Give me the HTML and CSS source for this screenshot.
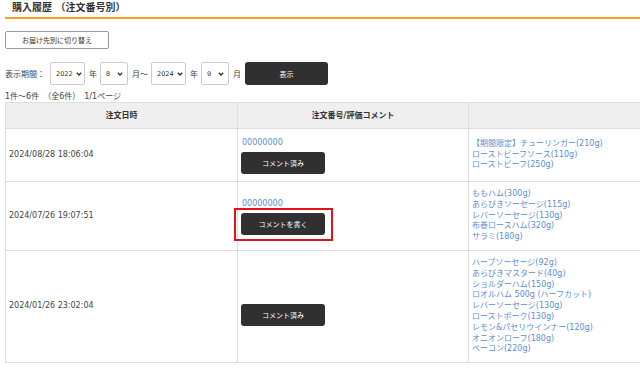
FILE: index.html
```html
<!DOCTYPE html>
<html lang="ja">
<head>
<meta charset="utf-8" />
<title>購入履歴</title>
<link rel="stylesheet" href="styles.css">
</head>
<body>
	<div class="page">
		<h1 class="title">購入履歴 （注文番号別）</h1>
		<button class="switchBtn" type="button">お届け先別に切り替え</button>

		<form class="period" name="period">
			<span class="label">表示期間：</span>
			<span class="select wide"><span>2022</span>
				<svg class="chev" width="6" height="4" viewBox="0 0 6 4"><polyline points="0.8,0.8 3,3 5.2,0.8" /></svg></span>
			<span class="unit">年</span>
			<span class="select"><span>8</span>
				<svg class="chev" width="6" height="4" viewBox="0 0 6 4"><polyline points="0.8,0.8 3,3 5.2,0.8" /></svg></span>
			<span class="unit">月～</span>
			<span class="select wide"><span>2024</span>
				<svg class="chev" width="6" height="4" viewBox="0 0 6 4"><polyline points="0.8,0.8 3,3 5.2,0.8" /></svg></span>
			<span class="unit">年</span>
			<span class="select"><span>9</span>
				<svg class="chev" width="6" height="4" viewBox="0 0 6 4"><polyline points="0.8,0.8 3,3 5.2,0.8" /></svg></span>
			<span class="unit">月</span>
			<button class="darkBtn showBtn" type="button">表示</button>
		</form>

		<p class="count">1件～6件　（全6件）　1/1ページ</p>

		<table class="history">
			<colgroup>
				<col class="colDate" />
				<col class="colOrder" />
				<col class="colItems" />
			</colgroup>
			<thead>
				<tr>
					<th>注文日時</th>
					<th>注文番号/評価コメント</th>
					<th></th>
				</tr>
			</thead>
			<tbody>
				<tr>
					<td class="date">2024/08/28 18:06:04</td>
					<td class="order">
						<a class="orderNo" href="#">00000000</a>
						<button class="darkBtn commentBtn" type="button">コメント済み</button>
					</td>
					<td class="items">
						<a href="#">【期間限定】チューリンガー(210g)</a>
						<a href="#">ローストビーフソース(110g)</a>
						<a href="#">ローストビーフ(250g)</a>
					</td>
				</tr>
				<tr>
					<td class="date">2024/07/26 19:07:51</td>
					<td class="order">
						<a class="orderNo" href="#">00000000</a>
						<!-- red frame = annotation in the original screenshot -->
						<button class="darkBtn commentBtn highlight" type="button">コメントを書く</button>
					</td>
					<td class="items">
						<a href="#">ももハム(300g)</a>
						<a href="#">あらびきソーセージ(115g)</a>
						<a href="#">レバーソーセージ(130g)</a>
						<a href="#">布巻ロースハム(320g)</a>
						<a href="#">サラミ(180g)</a>
					</td>
				</tr>
				<tr>
					<td class="date">2024/01/26 23:02:04</td>
					<td class="order">
						<a class="orderNo" href="#"></a>
						<button class="darkBtn commentBtn" type="button">コメント済み</button>
					</td>
					<td class="items">
						<a href="#">ハーブソーセージ(92g)</a>
						<a href="#">あらびきマスタード(40g)</a>
						<a href="#">ショルダーハム(150g)</a>
						<a href="#">ロオルハム 500g (ハーフカット)</a>
						<a href="#">レバーソーセージ(130g)</a>
						<a href="#">ローストポーク(130g)</a>
						<a href="#">レモン&amp;パセリウインナー(120g)</a>
						<a href="#">オニオンローフ(180g)</a>
						<a href="#">ベーコン(220g)</a>
					</td>
				</tr>
			</tbody>
		</table>
	</div>
</body>
</html>
```

FILE: styles.css
```css
html {
	font-family: "DejaVu Sans", "Noto Sans CJK JP", sans-serif;
}

body {
	margin: 0;
	overflow: hidden;
	color: #444;
	font-size: 8px;
	background: #fff;
}

.page {
	padding-left: 5px;
}

.title {
	margin: 0;
	padding: 1px 0 2px 7px;
	font-size: 10px;
	line-height: 14px;
	font-weight: bold;
	color: #333;
	border-bottom: 2px solid #fa9f1b;
}

.switchBtn {
	display: block;
	margin-top: 12px;
	width: 104px;
	height: 18px;
	padding: 0;
	font-family: inherit;
	font-size: 7px;
	color: #333;
	background: #fff;
	border: 1px solid #999;
	border-radius: 2px;
}

.period {
	display: flex;
	align-items: center;
	margin-top: 13px;
	height: 23px;
}

.label {
	margin-right: 5px;
}

.select {
	display: inline-flex;
	align-items: center;
	justify-content: space-between;
	box-sizing: border-box;
	width: 28px;
	height: 23px;
	padding: 0 4px 0 5px;
	font-size: 6.5px;
	color: #333;
	background: #fff;
	border: 1px solid #ccc;
	border-radius: 2px;
}

.select.wide {
	width: 35px;
	padding-right: 2px;
}

.chev polyline {
	fill: none;
	stroke: #333;
	stroke-width: 1.4;
}

.unit {
	margin: 0 3px 0 4px;
}

.darkBtn {
	padding: 0;
	font-family: inherit;
	font-size: 7px;
	color: #fff;
	background: #303030;
	border: none;
	border-radius: 3px;
}

.showBtn {
	width: 83px;
	height: 23px;
	margin-left: 1px;
}

.count {
	margin: 7px 0 0;
	line-height: 10px;
}

.history {
	width: 696px;
	table-layout: fixed;
	border-collapse: collapse;
	line-height: 10.8px;
}

.colDate {
	width: 232px;
}

.colOrder {
	width: 231px;
}

.colItems {
	width: 233px;
}

.history th,
.history td {
	border: 1px solid #dedede;
	padding: 7px 3px;
	vertical-align: middle;
}

.history th {
	background: #efefef;
	color: #333;
	font-weight: bold;
	text-align: center;
	line-height: 11px;
}

.date {
	padding-left: 3px;
}

.history a {
	color: #5b8fd2;
	text-decoration: none;
}

.orderNo {
	display: block;
	height: 13px;
	line-height: 13px;
	margin: 0 0 3px 1px;
	font-size: 8px;
}

.commentBtn {
	display: block;
	width: 84px;
	height: 22px;
}

.highlight {
	position: relative;
}

.highlight::after {
	content: "";
	position: absolute;
	left: -7px;
	right: -8px;
	top: -5px;
	bottom: -6px;
	border: 2px solid #e3121b;
}

.items {
	padding-left: 4px;
}

.items a {
	display: block;
}
```
